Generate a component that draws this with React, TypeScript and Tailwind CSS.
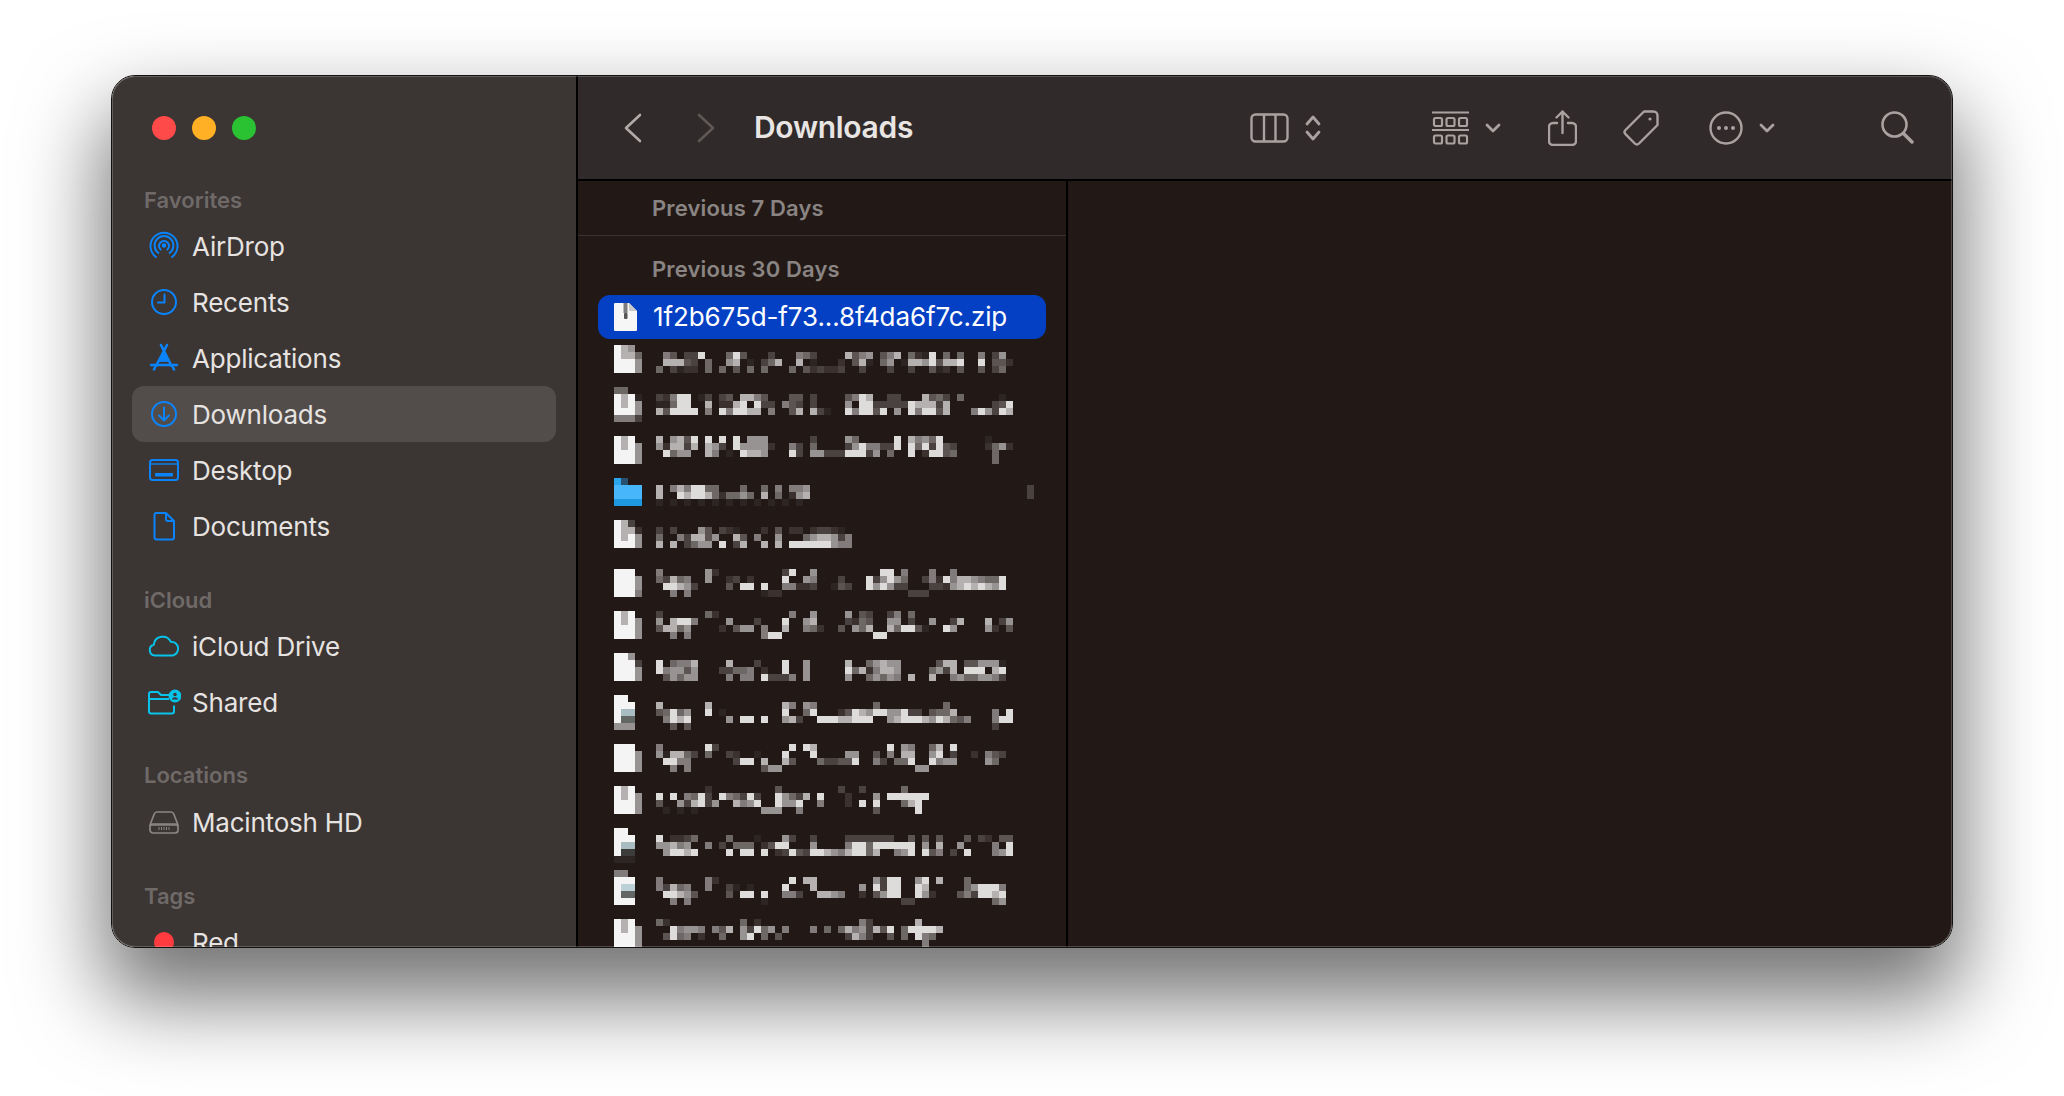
const shades: Record<string, string> = {
  "1": "#2d2523",
  "2": "#3b3230",
  "3": "#4a4240",
  "4": "#5b5453",
  "5": "#6d6766",
  "6": "#817c7b",
  "7": "#979392",
  "8": "#b4b1b0",
  "9": "#dedcdb",
  w: "#f4f4f4",
  b: "#2aa5ee",
  c: "#47b6fb",
  d: "#1f98e2",
  n: "#27516e",
  t: "#a8bcc2",
  g: "#626665",
  u: "#bcd0d8",
  k: "#3c3d3b",
};

function Mosaic({ lines }: { lines: string[] }) {
  const rows = lines.map((l) => l.replace(/ /g, ""));
  const cols = Math.max(...rows.map((r) => r.length));
  return (
    <svg width={cols * 7} height={rows.length * 7} shapeRendering="crispEdges" className="block shrink-0">
      {rows.map((row, y) =>
        row.split("").map((c, x) =>
          shades[c] ? <rect key={`${x}-${y}`} x={x * 7} y={y * 7} width={7} height={7} fill={shades[c]} /> : null
        )
      )}
    </svg>
  );
}

// h = row height on the 7px grid, textTop = where the name starts below the icon top
const blurredFiles = [
  {
    h: 42, textTop: 7,
    icon: ["w87.", "w885", "www7", "www7"],
    name: [
      ".64.339... 594...3... 653....846 7.468.5219 .5.5..6.37.",
      ".88843.5.. 78.1.358.. 8.1...2.48 1.57.18879 4889..9.442",
      "5.3122.5.5 .4.5.5...5 .423223..3 ...3..3..4 12.4..4.35.",
    ],
  },
  {
    h: 49, textTop: 7,
    icon: ["55..", "w8w1", "w8w7", "www7", "6663"],
    name: [
      "32699.13.3 4.8864...4 4.3....469 8..33...84 53.5.....1.",
      "11599..8.2 289.933.64 3.3....7.9 9333339888 38......349",
      "849999.6.9 69988.6..4 8.831..969 949.7.9699 48...697398",
    ],
  },
  {
    h: 42, textTop: 0,
    icon: ["w8w.", "w8w7", "www7", "www7"],
    name: [
      "8.7849.9.9 .9.777.... ..3....75. ....9.8675 9......1...",
      "728838.873 .977772..6 3.5....379 66339.9593 943....2572",
      ".9577..86. 1.9887...9 3.77333999 37.5..9.29 945.....5..",
      ".......... .......... .......... .......... ........5..",
    ],
  },
  {
    h: 42, textTop: 7,
    icon: ["bn..", "cccc", "cccc", "dddd"],
    name: [
      "8.6869955. ..5..5.6.6 67........ .......... .......... ...3",
      "8..9899852 5575.8.5.2 78........ .......... .......... ...3",
      "1.1.1.1.1. 1.1.1.1.1. 1......... .......... ..........",
    ],
  },
  {
    h: 49, textTop: 7,
    icon: ["w83.", "w882", "w8w7", "www7"],
    name: [
      "3.3...74.3 21...2.4.2 2.23321",
      "5..638847. .84.6..7.. .5788736",
      "8.8.3577.9 .38..8.8.9 99999766",
    ],
  },
  {
    h: 42, textTop: 0,
    icon: ["www.", "www7", "www7", "www6"],
    name: [
      "6......72. ........39 ..7....... ..99.6...6 ..6",
      "53856..7.. 23.2....9. .76...3... 937975..36 2968876559",
      ".99873.... 4.99.9..66 223..143.. 979733...3 3278989879",
      "..6.6..... .....122.. .......... ......333.",
    ],
  },
  {
    h: 42, textTop: 0,
    icon: ["w8w.", "w8w7", "www7", "www7"],
    name: [
      "3......52. .........6 ..7....7.4 3..36.5...",
      "7.8996.... 7...3...9. .78....325 4..77.3..7 ..38...8.37",
      "48857....2 .477.6..8. .652..4.75 8..859941. .97....72.4",
      "..6.6..... .....699.. .......... .99.......",
    ],
  },
  {
    h: 42, textTop: 7,
    icon: ["ww7.", "www3", "www7", "www7"],
    name: [
      "9.5668.... 8...3...9. .7.....8.. 57877..... 488.447771",
      "967747...3 3556.2..9. .7.....958 26887....5 738.999.89",
      ".47577.... 6.66.93336 .7.....7.. 57576.8..8 ..67557763",
    ],
  },
  {
    h: 49, textTop: 7,
    icon: ["ww..", "www.", "wtt.", "wgg.", "777."],
    name: [
      "8......8.. ........86 .76....... .5........ .5",
      "45957..9.1 ........9. .59...2498 79977933.4 558.....6.9",
      ".6989..... 7.99.9..78 3..9998899 9..7899987 98546...699",
      "..4.4..... .......... .......... .......... ........3",
    ],
  },
  {
    h: 42, textTop: 0,
    icon: ["www.", "www7", "www7", "www7"],
    name: [
      "6......93. .........9 .98....... ...9.76..5 8.9",
      "718853.5.. 32..1...9. ..9....77. .4.6.88..7 9.3..2.643",
      ".9966..... .399.8..84 ...533449. .63.559..9 677....75",
      "..6.6..... .....477.. .......... .......77.",
    ],
  },
  {
    h: 42, textTop: 0,
    icon: ["w8w.", "w8w7", "www7", "www7"],
    name: [
      ".......2.. .......4.. ......3..3 .....5....",
      "9.9.6593.9 65393..975 38.9...2.. .7.999999.",
      "4..738937. .8679..977 9..6...2.9 .9...589..",
      ".1.1.1.... .....777.. 6......... .4.....9..",
    ],
  },
  {
    h: 42, textTop: 7,
    icon: ["ww..", "www.", "wtt.", "wkk.", "111."],
    name: [
      "9.2235.... 5...1...73 ..3....333 3333..4.4. 4...4.32.44",
      "77867..6.3 .555.2499. ..7....699 5999999.7. 8..7....6.9",
      ".79989.... 9.99.9.239 4399876899 58..679.94 6.3.9...679",
    ],
  },
  {
    h: 49, textTop: 7,
    icon: ["66..", "www.", "wuu.", "wgg.", "www."],
    name: [
      "6......62. .........9 .88....... .7399..79. 8...5",
      "63856..6.. 31.1....9. ..8......7 .9399..98. ....579996",
      ".99874.... 4.99.9..66 3..8876..2 .4799..972 ...4639989",
      "..6.6..... .....1.... .......... .....33... ........57",
    ],
  },
  {
    h: 28, textTop: 0,
    icon: ["w8w.", "w8w7", "www7", "www7"],
    name: [
      "52........ ..5.2..... .........6 3......8..",
      "..96776.64 8.73957.6. ..6.5.5867 3849.59999 8",
      ".4956.2..5 ..79.5.4.. .......386 3..4.5.965",
      ".......... .......... .......... ........6.",
    ],
  },
];

const blue = "#0b84fb";
const cyan = "#07c3ea";

function AirDropIcon() {
  return (
    <svg width="32" height="32" viewBox="0 0 32 32" fill="none" stroke={blue} strokeWidth="2" strokeLinecap="round">
      <path d="M8 27a13.5 13.5 0 1 1 16 0" />
      <path d="M10.4 23a9.4 9.4 0 1 1 11.2 0" />
      <path d="M12.6 19.6a5 5 0 1 1 6.8 0" />
      <circle cx="16" cy="15.5" r="1.3" fill={blue} />
    </svg>
  );
}

function RecentsIcon() {
  return (
    <svg width="32" height="32" viewBox="0 0 32 32" fill="none" stroke={blue} strokeWidth="2" strokeLinecap="round" strokeLinejoin="round">
      <circle cx="16" cy="16" r="12" />
      <path d="M16.5 8.5v8h-6.5" />
    </svg>
  );
}

function ApplicationsIcon() {
  return (
    <svg width="32" height="32" viewBox="0 0 32 32" fill="none" stroke={blue} strokeLinecap="round">
      <path d="M13 3l10.5 21M19 3L8 24" strokeWidth="2.6" />
      <path d="M3 23h26" strokeWidth="2.4" />
      <path d="M11 19l5-8 5 8z" fill={blue} strokeWidth="1" />
      <path d="M6 27.5l1-2M26 27.5l-1-2" strokeWidth="2.6" />
    </svg>
  );
}

function DownloadsIcon() {
  return (
    <svg width="32" height="32" viewBox="0 0 32 32" fill="none" stroke={blue} strokeWidth="2" strokeLinecap="round" strokeLinejoin="round">
      <circle cx="16" cy="16" r="12" />
      <path d="M16 9.5v13M11 17.5l5 5 5-5" />
    </svg>
  );
}

function DesktopIcon() {
  return (
    <svg width="32" height="32" viewBox="0 0 32 32" fill="none">
      <rect x="2" y="6" width="28" height="20" rx="2.5" stroke={blue} strokeWidth="2" />
      <path d="M2 10h28" stroke={blue} strokeWidth="1.4" />
      <rect x="7" y="19" width="18" height="3.5" rx="0.8" fill={blue} />
    </svg>
  );
}

function DocumentsIcon() {
  return (
    <svg width="32" height="32" viewBox="0 0 32 32" fill="none" stroke={blue} strokeWidth="2" strokeLinejoin="round">
      <path d="M8.5 3h9.5l8 8v16.5a2 2 0 0 1-2 2H8.500a2 2 0 0 1-2-2V5a2 2 0 0 1 2-2z" />
      <path d="M18 3v6a2 2 0 0 0 2 2h6" />
    </svg>
  );
}

function CloudIcon() {
  return (
    <svg width="32" height="32" viewBox="0 0 32 32" fill="none" stroke={cyan} strokeWidth="2" strokeLinejoin="round">
      <path d="M7 25.500a5.500 5.500 0 0 1-1.200-10.800 9 9 0 0 1 17-3 7 7 0 0 1 2 13.800z" />
    </svg>
  );
}

function SharedIcon() {
  return (
    <svg width="34" height="32" viewBox="0 0 34 32" fill="none" stroke={cyan} strokeWidth="2" strokeLinejoin="round" className="-mr-0.5 -ml-0.5">
      <path d="M2 8a2 2 0 0 1 2-2h7l3 3h8" />
      <path d="M2 8v17.500a2 2 0 0 0 2 2h21a2 2 0 0 0 2-2v-6" />
      <path d="M2 13h20" />
      <circle cx="28" cy="10" r="5.500" fill={cyan} />
      <circle cx="28" cy="8.500" r="1.800" fill="#3b3533" stroke="none" />
      <path d="M24.800 13.500a3.400 3.400 0 0 1 6.400 0z" fill="#3b3533" stroke="none" />
    </svg>
  );
}

function DiskIcon() {
  return (
    <svg width="32" height="32" viewBox="0 0 32 32" fill="none" stroke="#8c8684" strokeWidth="1.700" strokeLinejoin="round">
      <path d="M9 6h14a3 3 0 0 1 2.800 2L30 19H2L6.200 8A3 3 0 0 1 9 6z" />
      <rect x="2" y="18" width="28" height="9" rx="3" />
      <path d="M11 21v3M13.500 21v3M16 21v3M18.500 21v3M21 21v3" strokeWidth="1" />
    </svg>
  );
}

function RedTag() {
  return (
    <div className="flex h-8 w-8 items-center justify-center">
      <div className="h-5 w-5 rounded-full bg-[#ff3b3f]" />
    </div>
  );
}

function SidebarRow({ icon, label, selected }: { icon: React.ReactNode; label: string; selected?: boolean }) {
  return (
    <div className={`flex h-14 items-center gap-3 rounded-xl pl-4 ${selected ? "bg-[#524d4a]" : ""}`}>
      <div className="flex h-8 w-8 shrink-0 items-center justify-center">{icon}</div>
      <span className="pt-0.5 text-[26px] leading-none tracking-[-0.2px] text-[#e6e3e1]">{label}</span>
    </div>
  );
}

function SectionTitle({ children, className = "mb-1" }: { children: React.ReactNode; className?: string }) {
  return <div className={`h-7 pl-3 text-[22px] leading-7 font-semibold text-[#6f6a68] ${className}`}>{children}</div>;
}

function Sidebar() {
  return (
    <aside className="w-[466px] shrink-0 overflow-hidden border-r-2 border-black bg-[#3b3533] px-5">
      <div className="mt-10 flex h-6 gap-4 pl-5">
        <div className="h-6 w-6 rounded-full bg-[#ff4a4a]" />
        <div className="h-6 w-6 rounded-full bg-[#ffb025]" />
        <div className="h-6 w-6 rounded-full bg-[#2ac232]" />
      </div>

      <div className="mt-[46px]">
        <SectionTitle>Favorites</SectionTitle>
        <SidebarRow icon={<AirDropIcon />} label="AirDrop" />
        <SidebarRow icon={<RecentsIcon />} label="Recents" />
        <SidebarRow icon={<ApplicationsIcon />} label="Applications" />
        <SidebarRow icon={<DownloadsIcon />} label="Downloads" selected />
        <SidebarRow icon={<DesktopIcon />} label="Desktop" />
        <SidebarRow icon={<DocumentsIcon />} label="Documents" />
      </div>

      <div className="mt-8">
        <SectionTitle>iCloud</SectionTitle>
        <SidebarRow icon={<CloudIcon />} label="iCloud Drive" />
        <SidebarRow icon={<SharedIcon />} label="Shared" />
      </div>

      <div className="mt-[31px]">
        <SectionTitle className="mb-[5px]">Locations</SectionTitle>
        <SidebarRow icon={<DiskIcon />} label="Macintosh HD" />
      </div>

      <div className="mt-8">
        <SectionTitle>Tags</SectionTitle>
        <SidebarRow icon={<RedTag />} label="Red" />
      </div>
    </aside>
  );
}

const toolStroke = "#aaa2a1";

function Toolbar() {
  return (
    <header className="flex h-[105px] shrink-0 items-center border-b-2 border-black bg-[#312a2a]">
      <svg width="18" height="30" viewBox="0 0 18 30" fill="none" stroke="#b0aaa8" strokeWidth="2.600" strokeLinecap="round" strokeLinejoin="round" className="ml-[46px]">
        <path d="M16 2L2 15l14 13" />
      </svg>
      <svg width="18" height="30" viewBox="0 0 18 30" fill="none" stroke="#5e5857" strokeWidth="2.600" strokeLinecap="round" strokeLinejoin="round" className="ml-[55px]">
        <path d="M2 2l14 13L2 28" />
      </svg>
      <h1 className="ml-[39px] pb-0.5 text-[30px] leading-none font-semibold tracking-[-0.3px] text-[#e8e5e3]">Downloads</h1>

      {/* view switcher */}
      <svg width="39" height="30" viewBox="0 0 39 30" fill="none" stroke={toolStroke} strokeWidth="2.400" className="ml-[337px]">
        <rect x="1.500" y="1.500" width="36" height="27" rx="4" />
        <path d="M14 1.500v27M25.500 1.500v27" />
      </svg>
      <svg width="16" height="26" viewBox="0 0 16 26" fill="none" stroke={toolStroke} strokeWidth="2.800" strokeLinecap="round" strokeLinejoin="round" className="ml-[16px]">
        <path d="M2 9l6-7 6 7M2 17l6 7 6-7" />
      </svg>

      {/* group */}
      <svg width="37" height="34" viewBox="0 0 37 34" fill="none" stroke={toolStroke} strokeWidth="2.200" className="ml-[111px]">
        <path d="M0 1.500h37M0 19h37" />
        <rect x="2" y="7" width="8" height="8" rx="1.500" />
        <rect x="14.500" y="7" width="8" height="8" rx="1.500" />
        <rect x="27" y="7" width="8" height="8" rx="1.500" />
        <rect x="2" y="24.500" width="8" height="8" rx="1.500" />
        <rect x="14.500" y="24.500" width="8" height="8" rx="1.500" />
        <rect x="27" y="24.500" width="8" height="8" rx="1.500" />
      </svg>
      <svg width="16" height="10" viewBox="0 0 16 10" fill="none" stroke={toolStroke} strokeWidth="2.800" strokeLinecap="round" strokeLinejoin="round" className="ml-[16px]">
        <path d="M2 2l6 6 6-6" />
      </svg>

      {/* share */}
      <svg width="29" height="36" viewBox="0 0 29 36" fill="none" stroke={toolStroke} strokeWidth="2.400" strokeLinecap="round" strokeLinejoin="round" className="ml-[47px]">
        <path d="M9 13H5a4 4 0 0 0-4 4v14a4 4 0 0 0 4 4h19a4 4 0 0 0 4-4V17a4 4 0 0 0-4-4h-4" />
        <path d="M14.500 23V1.500M8.500 7.500l6-6 6 6" />
      </svg>

      {/* tag */}
      <svg width="36" height="36" viewBox="0 0 36 36" fill="none" stroke={toolStroke} strokeWidth="2.400" strokeLinejoin="round" className="ml-[46px]">
        <path d="M21 1.500h9.500a4 4 0 0 1 4 4V15L16 33.500a3 3 0 0 1-4.200 0L2.500 24.200a3 3 0 0 1 0-4.200z" />
        <circle cx="27" cy="9" r="1.600" fill={toolStroke} stroke="none" />
      </svg>

      {/* more */}
      <svg width="34" height="34" viewBox="0 0 34 34" fill="none" stroke={toolStroke} strokeWidth="2.400" className="ml-[50px]">
        <circle cx="17" cy="17" r="15.500" />
        <circle cx="10" cy="17" r="2" fill={toolStroke} stroke="none" />
        <circle cx="17" cy="17" r="2" fill={toolStroke} stroke="none" />
        <circle cx="24" cy="17" r="2" fill={toolStroke} stroke="none" />
      </svg>
      <svg width="16" height="10" viewBox="0 0 16 10" fill="none" stroke={toolStroke} strokeWidth="2.800" strokeLinecap="round" strokeLinejoin="round" className="ml-[16px]">
        <path d="M2 2l6 6 6-6" />
      </svg>

      {/* search */}
      <svg width="33" height="33" viewBox="0 0 33 33" fill="none" stroke={toolStroke} strokeWidth="2.600" strokeLinecap="round" className="ml-[106px]">
        <circle cx="13.500" cy="13.500" r="12" />
        <path d="M22.500 22.500L31 31" strokeWidth="3.400" />
      </svg>
    </header>
  );
}

function ZipIcon() {
  return (
    <svg width="24" height="28" viewBox="0 0 24 28" className="shrink-0">
      <path d="M1 0h14l8 8v19a1 1 0 0 1-1 1H1a1 1 0 0 1-1-1V1a1 1 0 0 1 1-1z" fill="#f6f6f6" />
      <path d="M15 0l8 8h-7a1 1 0 0 1-1-1z" fill="#c9c9c9" />
      <rect x="9.500" y="0" width="4" height="10" fill="#7d7d7d" />
      <rect x="10" y="10" width="3.500" height="6" rx="1" fill="#555" />
    </svg>
  );
}

function FileColumn() {
  return (
    <section className="w-[490px] shrink-0 overflow-hidden border-r-2 border-black">
      <div className="h-[54px] pl-[74px] text-[22px] leading-[54px] font-semibold tracking-[0.15px] text-[#8a8482]">Previous 7 Days</div>
      <div className="h-px bg-[#3a3331]" />
      <div className="h-[59px] pl-[74px] text-[22px] leading-[67px] font-semibold tracking-[0.15px] text-[#8a8482]">Previous 30 Days</div>

      <div className="mx-5 flex h-11 items-center gap-[15px] rounded-xl bg-[#0440c4] pl-4">
        <ZipIcon />
        <span className="text-[26px] leading-none tracking-[-0.1px] text-white">1f2b675d-f73...8f4da6f7c.zip</span>
      </div>

      <div className="mt-1.5 pl-9">
        {blurredFiles.map((file, i) => (
          <div key={i} className="flex gap-3.5" style={{ height: file.h }}>
            <Mosaic lines={file.icon} />
            <div style={{ paddingTop: file.textTop }}>
              <Mosaic lines={file.name} />
            </div>
          </div>
        ))}
      </div>
    </section>
  );
}

export default function App() {
  return (
    <div className="h-screen w-screen overflow-hidden bg-white pt-[75px] pl-[111px] font-['Inter',sans-serif]">
      <div className="relative flex h-[873px] w-[1842px] overflow-hidden rounded-[24px] border border-[#111] shadow-[0_44px_84px_8px_rgba(0,0,0,0.55)] after:pointer-events-none after:absolute after:inset-0 after:rounded-[23px] after:shadow-[inset_0_0_0_1px_rgba(255,255,255,0.2)] after:content-['']">
        <Sidebar />
        <main className="flex min-w-0 flex-1 flex-col bg-[#221917]">
          <Toolbar />
          <div className="flex min-h-0 flex-1">
            <FileColumn />
            <div className="flex-1" />
          </div>
        </main>
      </div>
    </div>
  );
}
